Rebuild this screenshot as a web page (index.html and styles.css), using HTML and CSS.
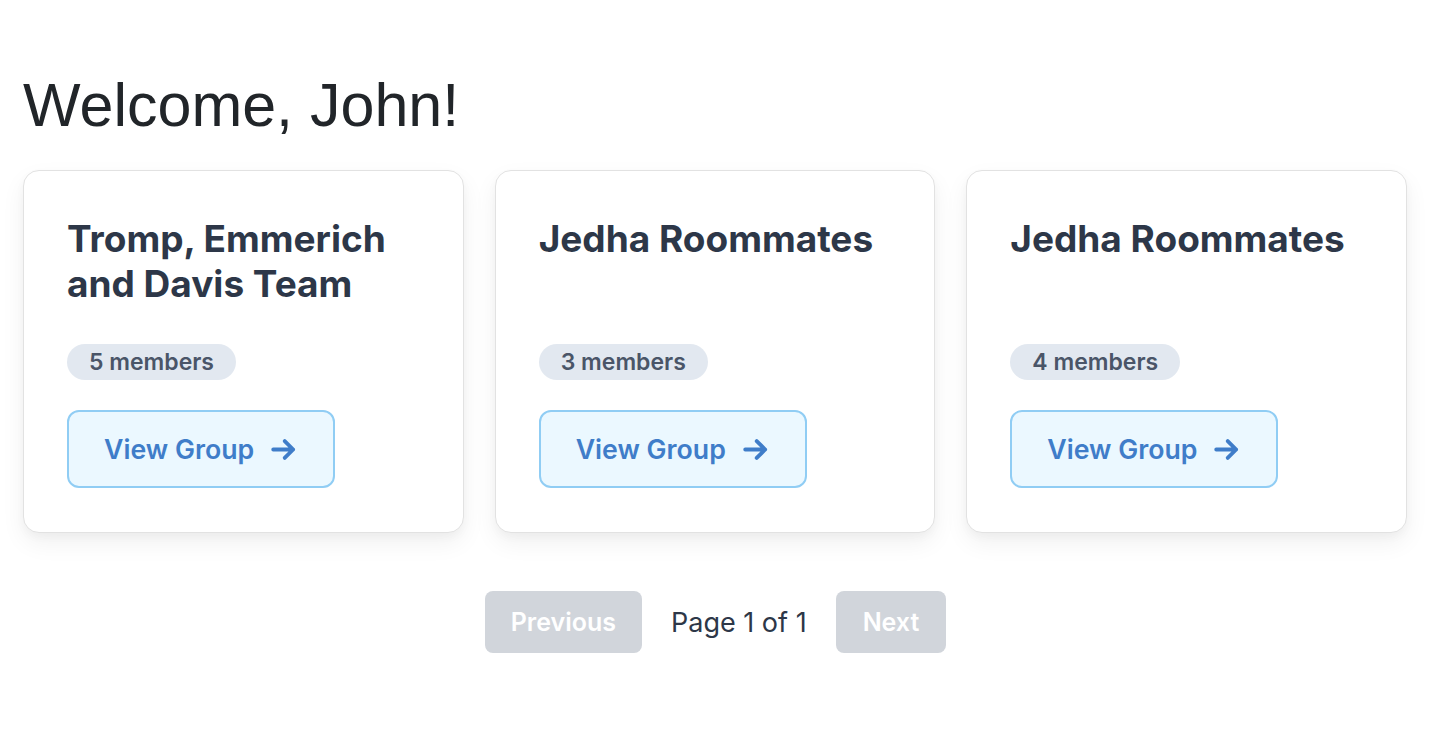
FILE: index.html
```html
<!DOCTYPE html>
<html lang="en">
<head>
<meta charset="utf-8">
<title>Dashboard</title>
<link rel="stylesheet" href="styles.css">
</head>
<body>
<main class="page">
  <h1 class="title">Welcome, John!</h1>
  <section class="cards">
    <article class="card">
      <h2 class="card-title">Tromp, Emmerich and Davis Team</h2>
      <span class="badge">5 members</span>
      <a class="btn-view" href="#">View Group
        <svg class="arrow" viewBox="0 0 24 24" fill="none" stroke="currentColor" stroke-width="3.2" stroke-linecap="round" stroke-linejoin="round"><path d="M3.5 12h16.5M13 5l7 7-7 7"/></svg>
      </a>
    </article>
    <article class="card">
      <h2 class="card-title">Jedha Roommates</h2>
      <span class="badge">3 members</span>
      <a class="btn-view" href="#">View Group
        <svg class="arrow" viewBox="0 0 24 24" fill="none" stroke="currentColor" stroke-width="3.2" stroke-linecap="round" stroke-linejoin="round"><path d="M3.5 12h16.5M13 5l7 7-7 7"/></svg>
      </a>
    </article>
    <article class="card">
      <h2 class="card-title">Jedha Roommates</h2>
      <span class="badge">4 members</span>
      <a class="btn-view" href="#">View Group
        <svg class="arrow" viewBox="0 0 24 24" fill="none" stroke="currentColor" stroke-width="3.2" stroke-linecap="round" stroke-linejoin="round"><path d="M3.5 12h16.5M13 5l7 7-7 7"/></svg>
      </a>
    </article>
  </section>
  <nav class="pager">
    <button class="pager-btn" disabled>Previous</button>
    <span class="pager-info">Page 1 of 1</span>
    <button class="pager-btn pager-next" disabled>Next</button>
  </nav>
</main>
</body>
</html>
```
FILE: styles.css
```css
* { box-sizing: border-box; }
html, body { margin: 0; padding: 0; background: #fff; }
body { font-family: Inter, "Noto Sans", sans-serif; color: #2d3748; }

.page {
  padding: 69px 24px 40px 23px;
}

.title {
  margin: 0 0 29px 0;
  font-family: "Liberation Sans", Arial, sans-serif;
  font-weight: 400;
  font-size: 61px;
  line-height: 72px;
  color: #212529;
}

.cards {
  display: grid;
  grid-template-columns: repeat(3, 1fr);
  gap: 31px;
}

.card {
  display: flex;
  flex-direction: column;
  align-items: flex-start;
  border: 1px solid #e2e2e2;
  border-radius: 16px;
  background: #fff;
  padding: 45px 43px 44px 43px;
  box-shadow: 0 10px 25px rgba(0,0,0,0.06), 0 4px 10px rgba(0,0,0,0.03);
}

.card-title {
  margin: 0 0 38px 0;
  font-size: 37px;
  line-height: 45px;
  font-weight: 700;
  color: #2d3748;
  min-height: 90px;
}

.badge {
  display: inline-block;
  background: #e2e8f0;
  color: #4a5568;
  font-size: 23px;
  font-weight: 600;
  line-height: 36px;
  height: 36px;
  padding: 0 22px;
  border-radius: 18px;
  margin-bottom: 30px;
}

.btn-view {
  display: inline-flex;
  align-items: center;
  gap: 15px;
  height: 78px;
  padding: 0 35px 0 35px;
  background: #ebf8ff;
  border: 2px solid #90cdf4;
  border-radius: 12px;
  color: #3f7dc9;
  font-size: 26.7px;
  font-weight: 600;
  text-decoration: none;
}

.arrow {
  width: 29px;
  height: 29px;
}

.pager {
  display: flex;
  justify-content: center;
  align-items: center;
  gap: 29px;
  margin-top: 58px;
  padding-left: 1px;
}

.pager-btn {
  height: 62px;
  padding: 0 26px;
  border: none;
  border-radius: 8px;
  background: #d1d5db;
  color: #fff;
  font-family: Inter, "Noto Sans", sans-serif;
  font-size: 25px;
  font-weight: 600;
}

.pager-next {
  padding: 0 27px;
}

.pager-info {
  font-size: 27px;
  color: #2d3748;
}
```
